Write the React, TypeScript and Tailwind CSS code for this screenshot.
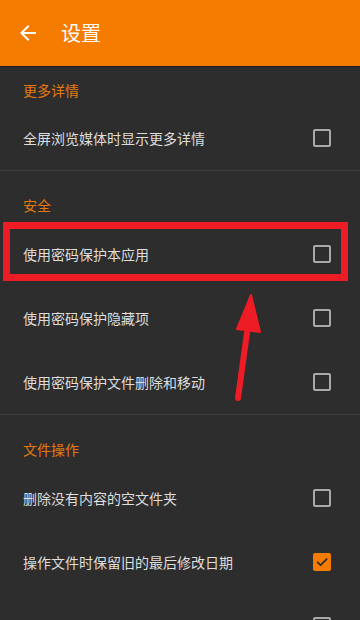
import React from 'react';

interface Item {
  label: string;
  checked?: boolean;
}

interface Section {
  title: string;
  items: Item[];
}

const sections: Section[] = [
  { title: '更多详情', items: [{ label: '全屏浏览媒体时显示更多详情' }] },
  {
    title: '安全',
    items: [
      { label: '使用密码保护本应用' },
      { label: '使用密码保护隐藏项' },
      { label: '使用密码保护文件删除和移动' },
    ],
  },
  {
    title: '文件操作',
    items: [
      { label: '删除没有内容的空文件夹' },
      { label: '操作文件时保留旧的最后修改日期', checked: true },
      { label: '删除文件前显示确认对话框' },
    ],
  },
];

const Checkbox = ({ checked }: { checked?: boolean }) =>
  checked ? (
    <div className="w-[18px] h-[18px] rounded-[2px] bg-[#f57c00] flex items-center justify-center">
      <svg width="14" height="14" viewBox="0 0 24 24" fill="none">
        <path d="M4.5 12.5l5 5L20 7" stroke="#2d2d2d" strokeWidth="3" strokeLinecap="round" strokeLinejoin="round" />
      </svg>
    </div>
  ) : (
    <div className="w-[18px] h-[18px] rounded-[2px] border-2 border-[#a8a8a8]" />
  );

const App = () => {
  return (
    <div
      className="relative w-[360px] h-[620px] overflow-hidden bg-[#2d2d2d]"
      style={{ fontFamily: '"Noto Sans CJK SC", "Noto Sans", Roboto, sans-serif' }}
    >
      {/* Toolbar */}
      <div className="h-[67px] bg-[#f57c00] border-b border-[#1e1e1e] flex items-center pl-4">
        <svg width="24" height="24" viewBox="0 0 24 24" fill="white">
          <path d="M20 11H7.83l5.59-5.59L12 4l-8 8 8 8 1.41-1.41L7.83 13H20v-2z" />
        </svg>
        <span className="ml-[21px] text-[20px] leading-none text-white">设置</span>
      </div>

      {sections.map((section, si) => (
        <div key={section.title} className={si > 0 ? 'border-t border-[#3e3e3e]' : ''}>
          <div
            className={`px-[23px] text-[14px] leading-[20px] text-[#e57a10] ${
              si === 0 ? 'pt-[13px] pb-[6px]' : 'pt-[24px] pb-[7px]'
            }`}
          >
            {section.title}
          </div>
          {section.items.map((item) => (
            <div key={item.label} className="h-[64px] flex items-center justify-between pl-[23px] pr-[29px]">
              <span className="text-[14px] text-[#dedede]">{item.label}</span>
              <Checkbox checked={item.checked} />
            </div>
          ))}
        </div>
      ))}

      {/* Annotation: red box */}
      <div className="absolute left-[3px] top-[222px] w-[345px] h-[59px] border-[7px] border-[#ee1c25] pointer-events-none" />

      {/* Annotation: red arrow */}
      <svg className="absolute left-0 top-0 pointer-events-none" width="360" height="620">
        <line x1="238" y1="398" x2="248.5" y2="322" stroke="#ee1c25" strokeWidth="6" strokeLinecap="round" />
        <polygon points="251,295 237,329 260,332" fill="#ee1c25" stroke="#ee1c25" strokeWidth="2" strokeLinejoin="round" />
      </svg>
    </div>
  );
};

export default App;
